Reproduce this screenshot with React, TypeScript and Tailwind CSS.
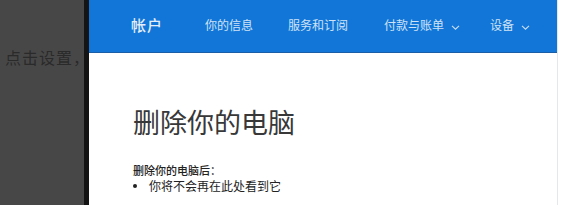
import React from "react";

const cjk = { fontFamily: '"Noto Sans CJK SC", "Noto Sans", sans-serif' };

function Chevron() {
  return (
    <svg width="9" height="5" viewBox="0 0 9 5" className="ml-[7px] mt-[4px]" fill="none">
      <path d="M1 0.8 L4.5 4.2 L8 0.8" stroke="#c8def5" strokeWidth="1.1" />
    </svg>
  );
}

export default function App() {
  return (
    <div className="w-[570px] h-[205px] flex overflow-hidden bg-white" style={cjk}>
      <div className="w-[84px] h-full bg-[#474747] overflow-hidden shrink-0">
        <div className="pl-[5px] pt-[46px] whitespace-nowrap text-[16px] leading-[22px] tracking-[1px] text-[#2a2a2a]">
          点击设置，
        </div>
      </div>
      <div className="w-[5px] h-full bg-[#141414] shrink-0" />
      <div className="w-[469px] h-full flex flex-col shrink-0 border-r border-[#e4e8ec]">
        <div className="h-[53px] bg-[#1176d8] border-b border-[#1a5ea8] flex items-center text-[#cfe2f6] pl-[42px] pb-[2px]">
          <span className="text-[15px] font-medium text-[#e4eefa] tracking-[1px]">帐户</span>
          <span className="text-[12px] ml-[42px]">你的信息</span>
          <span className="text-[12px] ml-[35px]">服务和订阅</span>
          <span className="text-[12px] ml-[36px] flex items-center">付款与账单<Chevron /></span>
          <span className="text-[12px] ml-[30px] flex items-center">设备<Chevron /></span>
        </div>
        <div className="flex-1 bg-white pl-[44px] pt-[55px]">
          <div className="text-[27px] leading-none font-normal text-[#383838]">删除你的电脑</div>
          <div className="mt-[27px] text-[11px] leading-[16px] text-[#222222] font-medium">删除你的电脑后：</div>
          <div className="flex items-center text-[12px] leading-[16px] text-[#222222]">
            <span className="w-[4px] h-[4px] rounded-full bg-[#222222] mr-[12px]" />
            <span>你将不会再在此处看到它</span>
          </div>
        </div>
      </div>
      <div className="flex-1 bg-white" />
    </div>
  );
}
